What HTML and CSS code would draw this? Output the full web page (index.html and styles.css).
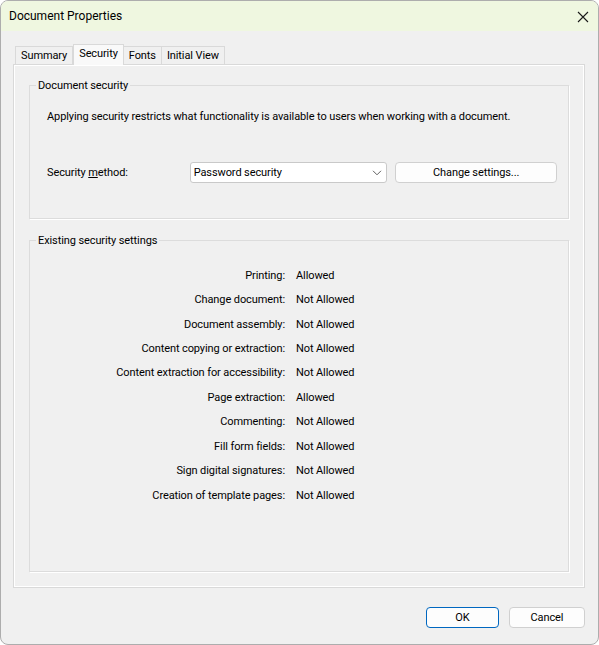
FILE: index.html
```html
<!DOCTYPE html>
<html lang="en">
<head>
  <meta charset="UTF-8">
  <title>Document Properties</title>
  <link rel="stylesheet" href="styles.css">
</head>
<body>
  <div class="window">
    <div class="titlebar">
      <span class="title">Document Properties</span>
      <svg class="close" width="12" height="12" viewBox="0 0 12 12">
        <path d="M1 1 L11 11 M11 1 L1 11" stroke="#1a1a1a" stroke-width="1.1" fill="none"/>
      </svg>
    </div>

    <div class="client">
      <div class="tabs">
        <div class="tab">Summary</div>
        <div class="tab selected">Security</div>
        <div class="tab">Fonts</div>
        <div class="tab">Initial View</div>
      </div>

      <div class="panel">
        <fieldset class="group group-doc">
          <legend>Document security</legend>
          <div class="doc-body">
            <div class="intro">Applying security restricts what functionality is available to users when working with a document.</div>
            <div class="method-row">
              <div class="method-label">Security <u>m</u>ethod:</div>
              <div class="select">
                <span>Password security</span>
                <svg width="10" height="6" viewBox="0 0 10 6">
                  <path d="M1 0.8 L5 4.8 L9 0.8" stroke="#606060" stroke-width="1" fill="none"/>
                </svg>
              </div>
              <div class="btn change-btn">Change settings...</div>
            </div>
          </div>
        </fieldset>

        <fieldset class="group group-settings">
          <legend>Existing security settings</legend>
          <div class="settings">
            <div class="key">Printing:</div><div class="val">Allowed</div>
            <div class="key">Change document:</div><div class="val">Not Allowed</div>
            <div class="key">Document assembly:</div><div class="val">Not Allowed</div>
            <div class="key">Content copying or extraction:</div><div class="val">Not Allowed</div>
            <div class="key">Content extraction for accessibility:</div><div class="val">Not Allowed</div>
            <div class="key">Page extraction:</div><div class="val">Allowed</div>
            <div class="key">Commenting:</div><div class="val">Not Allowed</div>
            <div class="key">Fill form fields:</div><div class="val">Not Allowed</div>
            <div class="key">Sign digital signatures:</div><div class="val">Not Allowed</div>
            <div class="key">Creation of template pages:</div><div class="val">Not Allowed</div>
          </div>
        </fieldset>
      </div>

      <div class="footer">
        <div class="btn btn-ok">OK</div>
        <div class="btn btn-cancel">Cancel</div>
      </div>
    </div>
  </div>
</body>
</html>
```

FILE: styles.css
```css
body {
  margin: 0;
  background-color: #fff;
  font-family: Roboto, "Liberation Sans", sans-serif;
  font-size: 11px;
  letter-spacing: -0.1px;
  color: #000;
}
.window {
  width: 599px;
  height: 645px;
  box-sizing: border-box;
  border: 1px solid #adadad;
  border-radius: 8px;
  background-color: #f0f0f0;
  overflow: hidden;
}
.titlebar {
  height: 30px;
  background-color: #eff7e0;
  display: flex;
  align-items: center;
  justify-content: space-between;
  padding: 0 9px 0 8px;
}
.title {
  font-size: 12px;
  letter-spacing: 0;
}
.close {
  display: block;
  margin-top: 1px;
}
.client {
  padding: 14px 13px 0 12px;
}
.tabs {
  display: flex;
  align-items: flex-end;
  padding-left: 2px;
  height: 19px;
}
.tab {
  height: 17px;
  line-height: 17px;
  padding: 0 5px;
  border: 1px solid #d9d9d9;
  border-bottom: none;
  border-left: none;
  background-color: #f0f0f0;
  color: #000;
}
.tab:first-child {
  border-left: 1px solid #d9d9d9;
}
.tab.selected {
  height: 19px;
  line-height: 18px;
  border-left: 1px solid #d9d9d9;
  background-color: #f9f9f9;
  margin-bottom: -1px;
  position: relative;
  z-index: 1;
  padding-bottom: 1px;
}
.panel {
  height: 524px;
  box-sizing: border-box;
  border: 1px solid #d9d9d9;
  box-shadow: inset 1px 1px 0 #fff, inset -1px -1px 0 #fff;
  padding: 13px 15px 15px 15px;
  display: flex;
  flex-direction: column;
}
.group {
  margin: 0;
  padding: 0;
  border: 1px solid #dcdcdc;
  box-shadow: 1px 1px 0 #fff;
  min-width: 0;
}
.group legend {
  margin-left: 6px;
  padding: 1px 2px 0;
  line-height: 14px;
}
.doc-body {
  padding: 17px 11px 35px 17px;
}
.intro {
  line-height: 14px;
}
.method-row {
  margin-top: 38px;
  display: flex;
  align-items: center;
}
.method-label {
  width: 143px;
}
.select {
  width: 198px;
  height: 21px;
  box-sizing: border-box;
  border: 1px solid #c9c9c9;
  border-radius: 3px;
  background-color: #fff;
  display: flex;
  align-items: center;
  justify-content: space-between;
  padding: 0 4px 0 3px;
}
.select svg {
  display: block;
}
.btn {
  box-sizing: border-box;
  height: 21px;
  border: 1px solid #d0d0d0;
  border-radius: 4px;
  background-color: #fdfdfd;
  display: flex;
  align-items: center;
  justify-content: center;
}
.change-btn {
  width: 162px;
  margin-left: 8px;
}
.group-settings {
  margin-top: 14px;
  flex: 1;
}
.settings {
  display: grid;
  grid-template-columns: 255px auto;
  column-gap: 11px;
  grid-auto-rows: 24.45px;
  align-items: center;
  padding-top: 15px;
}
.key {
  text-align: right;
}
.footer {
  display: flex;
  justify-content: flex-end;
  gap: 10px;
  margin-top: 19px;
}
.btn-ok {
  width: 73px;
  border-color: #0067c0;
}
.btn-cancel {
  width: 76px;
}
```
